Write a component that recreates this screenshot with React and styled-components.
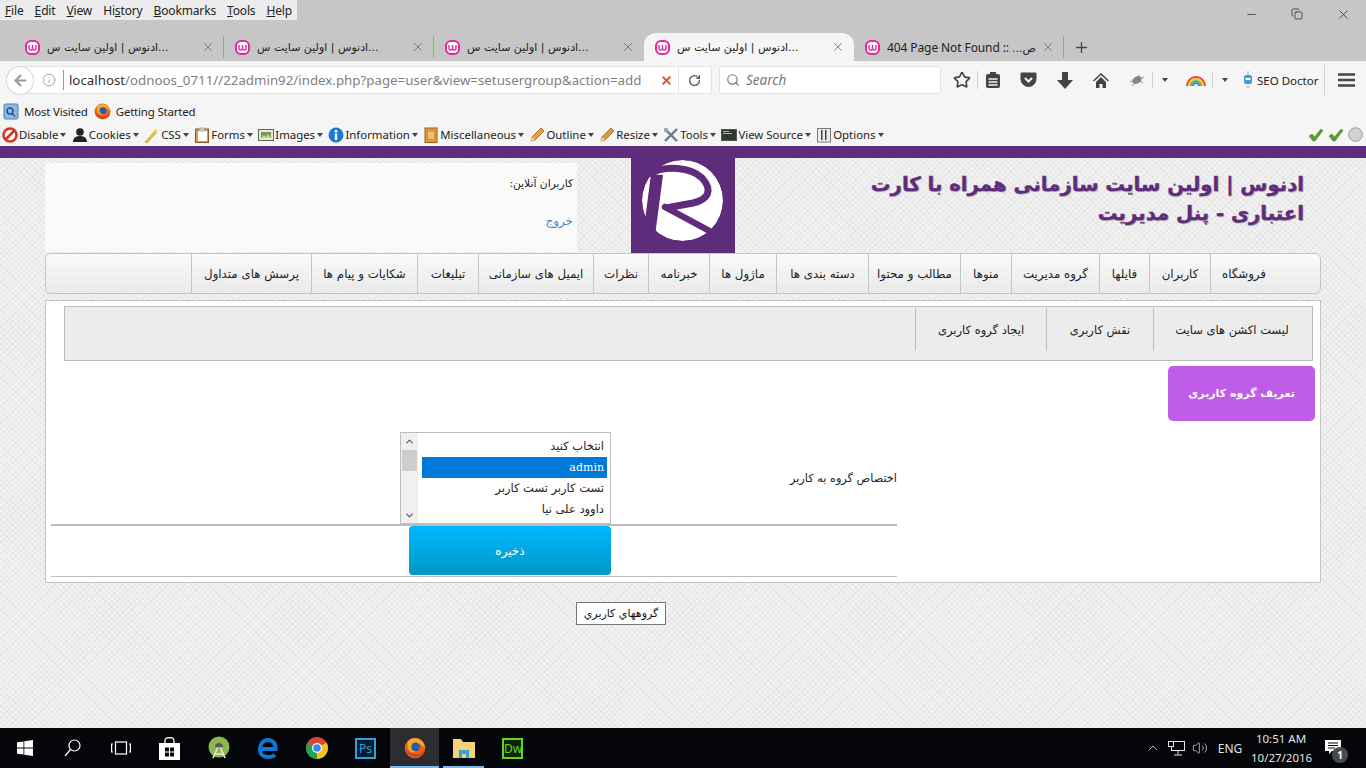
import React from 'react'
import styled, { createGlobalStyle } from 'styled-components'
import { Minus, Copy, X, Plus, RotateCw, Search, Info, ArrowLeft, Star, ChevronUp, ChevronDown, Volume2 } from 'lucide-react'

const GlobalStyle = createGlobalStyle`
  html, body { margin: 0; padding: 0; overflow: hidden; }
  body { font-family: "Noto Sans", sans-serif; }
  * { box-sizing: border-box; }
`

const Screen = styled.div`
  width: 1366px;
  height: 768px;
  display: flex;
  flex-direction: column;
  background: #c6c6c6;
`

/* ---------- browser chrome ---------- */
const TitleBar = styled.div`
  height: 33px;
  display: flex;
  align-items: flex-start;
`
const MenuBar = styled.div`
  width: 297px;
  height: 20px;
  background: #ececec;
  display: flex;
  align-items: center;
  gap: 11px;
  padding-left: 5px;
  font-size: 12px;
  letter-spacing: -.15px;
  color: #222;
  u { text-decoration: underline; }
`
const WinControls = styled.div`
  margin-left: auto;
  display: flex;
  color: #222;
`
const WinBtn = styled.div`
  width: 46px;
  height: 28px;
  display: flex;
  align-items: center;
  justify-content: center;
`
const TabRow = styled.div`
  height: 28px;
  display: flex;
  padding-left: 14px;
  align-items: stretch;
`
const Tab = styled.div`
  width: 210px;
  display: flex;
  align-items: center;
  padding: 0 9px 0 11px;
  gap: 7px;
  position: relative;
  font-size: 12px;
  color: #222;
  background: ${p => (p.$active ? '#f5f5f5' : 'transparent')};
  border-radius: ${p => (p.$active ? '12px 12px 0 0' : '0')};
  svg { flex-shrink: 0; }
  &::after {
    content: '';
    display: ${p => (p.$sep ? 'block' : 'none')};
    position: absolute;
    right: 0;
    top: 3px;
    bottom: 3px;
    width: 1px;
    background: #a0a0a0;
  }
`
const TabTitle = styled.div`
  width: ${p => (p.$ltr ? 147 : 129)}px;
  margin-right: auto;
  white-space: nowrap;
  font-family: "DejaVu Sans", sans-serif;
  font-size: 11px;
  text-align: left;
`
const TabLatin = styled.span`
  font-family: "Noto Sans", sans-serif;
  font-size: 12px;
  letter-spacing: -.1px;
`
const TabClose = styled.div`
  width: 14px;
  display: flex;
  color: #555;
`
const NewTab = styled.div`
  width: 34px;
  display: flex;
  align-items: center;
  justify-content: center;
  color: #444;
`
const NavRow = styled.div`
  height: 36px;
  background: #f5f5f5;
  display: flex;
  align-items: center;
  padding: 2px 0 0 6px;
`
const UrlBox = styled.div`
  width: 706px;
  height: 28px;
  background: #fff;
  border: 1px solid #e4e4e4;
  border-radius: 14px 2px 2px 14px;
  display: flex;
  align-items: center;
  color: #777;
`
const BackBtn = styled.div`
  width: 29px;
  height: 29px;
  border-radius: 50%;
  border: 1px solid #d8d8d8;
  background: #fff;
  margin-left: -1px;
  display: flex;
  align-items: center;
  justify-content: center;
  color: #9a9a9a;
`
const InfoSlot = styled.div`
  width: 29px;
  display: flex;
  justify-content: center;
  color: #999;
`
const UrlText = styled.div`
  width: 595px;
  border-left: 1px solid #999;
  padding-left: 5px;
  font-size: 13.3px;
  line-height: 20px;
  white-space: nowrap;
  overflow: hidden;
  color: #808080;
  b { font-weight: 400; color: #333; }
`
const StopSlot = styled.div`
  width: 13px;
  margin-left: 13px;
  display: flex;
  color: #e8592c;
`
const ReloadSlot = styled.div`
  margin-left: 5px;
  width: 34px;
  height: 26px;
  border-left: 1px solid #e4e4e4;
  display: flex;
  align-items: center;
  justify-content: center;
  color: #555;
`
const SearchBox = styled.div`
  width: 222px;
  height: 28px;
  margin-left: 7px;
  background: #fff;
  border: 1px solid #e4e4e4;
  border-radius: 2px;
  display: flex;
  align-items: center;
  gap: 6px;
  padding-left: 6px;
  color: #777;
  font-size: 13.5px;
  font-style: italic;
`
const Slot = styled.div`
  width: ${p => p.$w || 22}px;
  margin-left: ${p => p.$ml || 0}px;
  height: 22px;
  display: flex;
  align-items: center;
  justify-content: center;
  color: #444;
`
const Sep = styled.div`
  width: 1px;
  height: ${p => p.$h || 18}px;
  margin-left: ${p => p.$ml || 0}px;
  background: #cfcfcf;
`
const Caret = styled.span`
  display: inline-block;
  width: 0;
  height: 0;
  margin-left: ${p => p.$ml || 1}px;
  border-left: 3.5px solid transparent;
  border-right: 3.5px solid transparent;
  border-top: 4px solid #444;
`
const SeoText = styled.div`
  font-size: 11.5px;
  color: #222;
  margin-left: 2px;
  width: 62px;
  white-space: nowrap;
`
const BookmarkRow = styled.div`
  height: 26px;
  background: #f5f5f5;
  display: flex;
  align-items: center;
  padding: 2px 0 0 3px;
  font-size: 11.5px;
  letter-spacing: -.2px;
  color: #222;
`
const BookmarkItem = styled.div`
  display: flex;
  align-items: center;
  gap: 5px;
  margin-right: 6px;
`
const DevRow = styled.div`
  height: 23px;
  background: #f5f5f5;
  display: flex;
  align-items: center;
  padding-left: 2px;
  font-size: 11.4px;
  color: #222;
`
const DevItem = styled.div`
  display: flex;
  align-items: center;
  margin-right: 5.4px;
  gap: 1px;
  white-space: nowrap;
`
const DevStatus = styled.div`
  margin-left: auto;
  display: flex;
  align-items: center;
  gap: 4px;
  padding-right: 3px;
`
const PurpleBar = styled.div`
  height: 12px;
  background: #5f2c7c;
`

/* ---------- page ---------- */
const Page = styled.div`
  flex: 1;
  font-family: "DejaVu Sans", sans-serif;
  background-color: #f1f1f1;
  background-image:
    repeating-linear-gradient(45deg, rgba(0,0,0,.035) 0 1px, transparent 1px 4px),
    repeating-linear-gradient(-45deg, rgba(0,0,0,.035) 0 1px, transparent 1px 4px);
`
const Header = styled.div`
  height: 95px;
  display: flex;
  padding-left: 45px;
`
const UserBox = styled.div`
  width: 532px;
  height: 89px;
  margin-top: 5px;
  padding: 14px 4px 0 0;
  background: rgba(255,255,255,.72);
  direction: rtl;
  font-size: 10.7px;
  color: #222;
`
const LogoutLink = styled.div`
  margin-top: 24px;
  font-size: 12px;
  color: #4a86c0;
`
const LogoBox = styled.div`
  width: 104px;
  height: 95px;
  margin-left: 54px;
  background: #5f2c7c;
`
const SiteTitle = styled.div`
  width: 569px;
  padding: 12px 0 0 120px;
  direction: rtl;
  font-size: 19.7px;
  line-height: 29px;
  font-weight: 700;
  color: #5f2c7c;
  -webkit-text-stroke: .4px #5f2c7c;
  text-shadow: 1px 1px 1px rgba(0,0,0,.25);
`
const MainMenu = styled.div`
  width: 1276px;
  height: 41px;
  margin-left: 45px;
  padding-right: 43px;
  direction: rtl;
  display: flex;
  background: linear-gradient(#fafafa, #e9e9e9);
  border: 1px solid #c4c4c4;
  border-radius: 6px;
`
const MenuItem = styled.div`
  width: ${p => p.$w}px;
  border-left: 1px solid #c4c4c4;
  display: flex;
  align-items: center;
  justify-content: center;
  white-space: nowrap;
  font-size: 11.8px;
  color: #222;
`
const Panel = styled.div`
  width: 1276px;
  height: 283px;
  margin: 6px 0 0 45px;
  background: #fff;
  border: 1px solid #c4c4c4;
  display: flex;
  flex-direction: column;
`
const SubMenu = styled.div`
  width: 1249px;
  height: 55px;
  margin: 5px 0 0 18px;
  padding: 1px 2px 9px 0;
  direction: rtl;
  display: flex;
  background: #ececec;
  border: 1px solid #bcbcbc;
`
const SubItem = styled.div`
  width: ${p => p.$w}px;
  border-left: 1px solid #bcbcbc;
  display: flex;
  align-items: center;
  justify-content: center;
  white-space: nowrap;
  font-size: 11.5px;
  color: #222;
`
const PageHeading = styled.div`
  width: 147px;
  height: 55px;
  margin: 5px 5px 0 auto;
  background: #bf5ce8;
  border-radius: 5px;
  direction: rtl;
  display: flex;
  align-items: center;
  justify-content: center;
  color: #fff;
  font-size: 11px;
  font-weight: 700;
  white-space: nowrap;
`
const FormTable = styled.div`
  width: 846px;
  margin: 11px 0 0 5px;
`
const FormRow = styled.div`
  display: flex;
  height: ${p => p.$h}px;
  padding-left: ${p => p.$pl}px;
  border-bottom: ${p => p.$line}px solid #bdbdbd;
`
const ListBox = styled.div`
  width: 211px;
  height: 92px;
  border: 1px solid #bdbdbd;
  background: #fff;
  display: flex;
`
const ScrollTrack = styled.div`
  width: 17px;
  background: #f0f0f0;
  display: flex;
  flex-direction: column;
  align-items: center;
  color: #555;
`
const ScrollThumb = styled.div`
  width: 15px;
  height: 21px;
  margin: 1px 0 auto;
  background: #cdcdcd;
`
const ScrollArrow = styled.div`
  height: 16px;
  display: flex;
  align-items: center;
`
const Options = styled.div`
  flex: 1;
  padding: 3px 3px 0 4px;
  direction: rtl;
`
const Option = styled.div`
  height: 21px;
  padding-right: 3px;
  line-height: 21px;
  font-size: ${p => (p.$selected ? 11 : 11.5)}px;
  white-space: nowrap;
  background: ${p => (p.$selected ? '#0078d7' : 'transparent')};
  color: ${p => (p.$selected ? '#fff' : '#222')};
  font-family: ${p => (p.$selected ? '"DejaVu Serif", serif' : '"DejaVu Sans", sans-serif')};
`
const FieldLabel = styled.div`
  margin: 40px 0 0 auto;
  direction: rtl;
  font-size: 11.3px;
  color: #222;
  white-space: nowrap;
`
const SaveButton = styled.div`
  width: 202px;
  height: 49px;
  background: linear-gradient(#00b7fd, #0099c6);
  border-radius: 4px;
  color: #fff;
  font-size: 12px;
  display: flex;
  align-items: center;
  justify-content: center;
`
const GroupsButton = styled.div`
  width: 90px;
  height: 23px;
  margin: 19px 0 0 576px;
  background: #fff;
  border: 1px solid #777;
  direction: rtl;
  font-size: 11px;
  color: #111;
  display: flex;
  align-items: center;
  justify-content: center;
  white-space: nowrap;
`

/* ---------- taskbar ---------- */
const Taskbar = styled.div`
  height: 40px;
  background: #05060a;
  display: flex;
  align-items: center;
  color: #fff;
`
const TaskBtn = styled.div`
  width: ${p => p.$w || 49}px;
  height: 40px;
  display: flex;
  align-items: center;
  justify-content: center;
  background: ${p => (p.$active ? '#2c2d30' : 'transparent')};
  position: relative;
  &::after {
    content: '';
    display: ${p => (p.$open ? 'block' : 'none')};
    position: absolute;
    left: ${p => (p.$active ? 0 : 4)}px;
    right: ${p => (p.$active ? 0 : 4)}px;
    bottom: 0;
    height: 2px;
    background: #76b9ed;
  }
`
const AppTile = styled.div`
  width: 21px;
  height: 21px;
  border: 2px solid ${p => p.$c};
  background: ${p => p.$bg};
  color: ${p => p.$c};
  font-size: 12px;
  line-height: 17px;
  text-align: center;
  font-family: "Noto Sans", sans-serif;
`
const Tray = styled.div`
  margin-left: auto;
  display: flex;
  align-items: center;
  height: 40px;
  font-size: 12px;
  color: #e4e4e4;
`
const TrayIcon = styled.div`
  width: ${p => p.$w}px;
  display: flex;
  justify-content: center;
`
const Clock = styled.div`
  width: 60px;
  text-align: center;
  line-height: 19px;
  font-size: 11.5px;
  white-space: nowrap;
`
const Notify = styled.div`
  width: 41px;
  height: 24px;
  margin-left: 14px;
  padding-top: 4px;
  position: relative;
`
const NotifyBadge = styled.div`
  position: absolute;
  left: 7px;
  top: 11px;
  width: 16px;
  height: 16px;
  border-radius: 50%;
  background: #4a4a4a;
  color: #fff;
  font-size: 10px;
  font-weight: 700;
  line-height: 16px;
  text-align: center;
`

/* ---------- drawings ---------- */
const Favicon = () => (
  <svg width="15" height="15" viewBox="0 0 15 15">
    <rect x="1" y="1" width="13" height="13" rx="5" fill="#fff" stroke="#e6249b" strokeWidth="2" />
    <path d="M4 5v3.500c0 2 2.200 2 3.500.6c1.300 1.400 3.500 1.400 3.500-.6V5M7.500 5v4" fill="none" stroke="#e6249b" strokeWidth="1.400" />
  </svg>
)
const Firefox = ({ size = 18 }) => (
  <svg width={size} height={size} viewBox="0 0 18 18">
    <circle cx="9" cy="9" r="8.400" fill="#e8631c" />
    <path d="M3 4C5 1 9 .5 12 1.500C15 3 17 6 17 9C14 5 11 5 9 6C6 7 7 11 10 11C8 14 4 12 3 9Z" fill="#f7a72a" />
    <circle cx="9.500" cy="8" r="3.600" fill="#2a5ba8" />
    <path d="M1 9c1 6 7 9 12 7c3-1 4-4 4-7c-1 3-3 5-6 5C6 14 3 12 1 9Z" fill="#d9441c" />
  </svg>
)
const Logo = () => (
  <svg width="104" height="95" viewBox="0 0 104 95">
    <circle cx="51.500" cy="42.500" r="40.500" fill="#fff" />
    <path d="M14 62L20 16L32 17L24 78Z" fill="#5f2c7c" />
    <path d="M17 16C35 7 60 9 71 20C83 33 76 42 62 45L35 50" fill="none" stroke="#5f2c7c" strokeWidth="7" />
    <path d="M34 49L86 77" fill="none" stroke="#5f2c7c" strokeWidth="6.500" strokeLinecap="round" />
    <path d="M0 0h104v95H0ZM51.500 2A40.500 40.500 0 1 0 51.500 83A40.500 40.500 0 1 0 51.500 2Z" fill="#5f2c7c" fillRule="evenodd" />
  </svg>
)
const Pencil = ({ c = '#e9a23b' }) => (
  <svg width="16" height="16" viewBox="0 0 16 16">
    <path d="M2 14l1-4L12 1l3 3-9 9Z" fill={c} stroke="#9a5a18" strokeWidth=".8" />
    <path d="M2 14l1-4 3 3Z" fill="#f4dcb0" />
  </svg>
)
const devIcons = {
  disable: (
    <svg width="16" height="16" viewBox="0 0 16 16">
      <circle cx="8" cy="8" r="6.500" fill="#fff" stroke="#d8341f" strokeWidth="2.600" />
      <path d="M3.500 12.500l9-9" stroke="#d8341f" strokeWidth="2.600" />
    </svg>
  ),
  cookies: (
    <svg width="16" height="16" viewBox="0 0 16 16">
      <circle cx="8" cy="5" r="3.800" fill="#222" />
      <path d="M1 15c0-4 3-6 7-6s7 2 7 6Z" fill="#222" />
    </svg>
  ),
  css: (
    <svg width="16" height="16" viewBox="0 0 16 16">
      <path d="M1 15L11 4l1.500 1.500L3 16Z" fill="#e8c53a" stroke="#8a7a20" strokeWidth=".5" />
      <path d="M12 1l.7 1.800L14.500 3.500l-1.800.7L12 6l-.7-1.800L9.500 3.500l1.800-.7Z" fill="#f2dd52" />
    </svg>
  ),
  forms: (
    <svg width="16" height="16" viewBox="0 0 16 16">
      <rect x="1.500" y="2" width="13" height="13.500" fill="#d99a55" stroke="#8f5a20" />
      <rect x="4" y="4" width="9" height="10" fill="#fff" />
      <rect x="5" y="1" width="6" height="3" fill="#ccc" stroke="#777" strokeWidth=".5" />
    </svg>
  ),
  images: (
    <svg width="16" height="16" viewBox="0 0 16 16">
      <rect x=".5" y="2.500" width="15" height="11" fill="#e8e8e0" stroke="#5a6a4a" />
      <rect x="3" y="5" width="10" height="6" fill="#6f9a55" />
      <path d="M3 11l3-3 2 2 2-3 3 4Z" fill="#d8d08a" />
    </svg>
  ),
  info: (
    <svg width="16" height="16" viewBox="0 0 16 16">
      <circle cx="8" cy="8" r="7.500" fill="#1f78d1" />
      <rect x="6.800" y="6.500" width="2.400" height="6.500" fill="#fff" />
      <circle cx="8" cy="4.200" r="1.400" fill="#fff" />
    </svg>
  ),
  misc: (
    <svg width="16" height="16" viewBox="0 0 16 16">
      <rect x="2" y="1" width="12" height="14.500" fill="#e09a3e" stroke="#96601c" />
      <rect x="4.500" y="4" width="7" height="8.500" fill="#f0be72" stroke="#b57a2a" strokeWidth=".6" />
    </svg>
  ),
  tools: (
    <svg width="16" height="16" viewBox="0 0 16 16">
      <path d="M2 2l12 12M14 2L2 14" stroke="#6a7a8a" strokeWidth="2.400" />
      <circle cx="3" cy="3" r="2.200" fill="#9aa8b5" />
    </svg>
  ),
  source: (
    <svg width="16" height="16" viewBox="0 0 16 16">
      <rect x=".5" y="2.500" width="15" height="11" fill="#2f3a2f" stroke="#555" />
      <rect x="2" y="4" width="6" height="1" fill="#8fd07a" />
      <rect x="2" y="6" width="9" height="1" fill="#8fd07a" />
    </svg>
  ),
  options: (
    <svg width="16" height="16" viewBox="0 0 16 16">
      <rect x="1.500" y="1.500" width="13" height="13.500" fill="#eee" stroke="#777" />
      <rect x="5" y="3" width="1.500" height="10" fill="#444" />
      <rect x="9" y="3" width="1.500" height="10" fill="#444" />
    </svg>
  ),
}
const Check = () => (
  <svg width="16" height="14" viewBox="0 0 16 14">
    <path d="M1 8l3-2 2.500 3L13 1l2 1.500L7 13H5Z" fill="#5aa02c" stroke="#3e7a1a" strokeWidth=".5" />
  </svg>
)
const Rainbow = () => (
  <svg width="22" height="12" viewBox="0 0 22 12" fill="none" strokeWidth="2">
    <path d="M2 12a9 9 0 0 1 18 0" stroke="#e8443a" />
    <path d="M4 12a7 7 0 0 1 14 0" stroke="#f2c230" />
    <path d="M6 12a5 5 0 0 1 10 0" stroke="#5cb84a" />
    <path d="M8 12a3 3 0 0 1 6 0" stroke="#3a8ad8" />
  </svg>
)

const devTools = [
  ['disable', 'Disable'], ['cookies', 'Cookies'], ['css', 'CSS'], ['forms', 'Forms'],
  ['images', 'Images'], ['info', 'Information'], ['misc', 'Miscellaneous'], ['outline', 'Outline'],
  ['resize', 'Resize'], ['tools', 'Tools'], ['source', 'View Source'], ['options', 'Options'],
]
const mainMenu = [
  ['فروشگاه', 67], ['کاربران', 61], ['فایلها', 50], ['گروه مدیریت', 88], ['منوها', 51],
  ['مطالب و محتوا', 92], ['دسته بندی ها', 92], ['ماژول ها', 67], ['خبرنامه', 61], ['نظرات', 55],
  ['ایمیل های سازمانی', 115], ['تبلیغات', 61], ['شکایات و پیام ها', 106], ['پرسش های متداول', 120],
]
const siteTab = '...ادنوس | اولین سایت س'

const SiteTab = ({ active, sep }) => (
  <Tab $active={active} $sep={sep}>
    <Favicon />
    <TabTitle dir="rtl">{siteTab}</TabTitle>
    <TabClose><X size={14} strokeWidth={1.2} /></TabClose>
  </Tab>
)

export default function App() {
  return (
    <Screen>
      <GlobalStyle />
      <TitleBar>
        <MenuBar>
          <span><u>F</u>ile</span>
          <span><u>E</u>dit</span>
          <span><u>V</u>iew</span>
          <span>Hi<u>s</u>tory</span>
          <span><u>B</u>ookmarks</span>
          <span><u>T</u>ools</span>
          <span><u>H</u>elp</span>
        </MenuBar>
        <WinControls>
          <WinBtn><Minus size={13} strokeWidth={1.3} /></WinBtn>
          <WinBtn><Copy size={12} strokeWidth={1.4} /></WinBtn>
          <WinBtn><X size={15} strokeWidth={1.1} /></WinBtn>
        </WinControls>
      </TitleBar>

      <TabRow>
        <SiteTab sep />
        <SiteTab sep />
        <SiteTab />
        <SiteTab active />
        <Tab $sep>
          <Favicon />
          <TabTitle $ltr>
            <TabLatin>404 Page Not Found :: </TabLatin>
            <span dir="rtl">ص...</span>
          </TabTitle>
          <TabClose><X size={14} strokeWidth={1.2} /></TabClose>
        </Tab>
        <NewTab><Plus size={17} strokeWidth={1.8} /></NewTab>
      </TabRow>

      <NavRow>
        <UrlBox>
          <BackBtn><ArrowLeft size={17} strokeWidth={3} /></BackBtn>
          <InfoSlot><Info size={14} strokeWidth={1.5} /></InfoSlot>
          <UrlText><b>localhost</b>/odnoos_0711//22admin92/index.php?page=user&amp;view=setusergroup&amp;action=add</UrlText>
          <StopSlot><X size={13} strokeWidth={4} /></StopSlot>
          <ReloadSlot><RotateCw size={13} strokeWidth={2.4} /></ReloadSlot>
        </UrlBox>
        <SearchBox><Search size={14} strokeWidth={2} />Search</SearchBox>
        <Slot $ml={10}><Star size={18} strokeWidth={2.2} /></Slot>
        <Sep $ml={4} />
        <Slot $ml={4}>
          <svg width="16" height="18" viewBox="0 0 16 18">
            <rect x="1" y="3" width="14" height="14" rx="2" fill="#444" />
            <rect x="5" y="1" width="6" height="4" fill="#444" />
            <path d="M3.500 8h9M3.500 11h9M3.500 14h9" stroke="#f5f5f5" strokeWidth="1.300" />
          </svg>
        </Slot>
        <Slot $ml={13}>
          <svg width="17" height="16" viewBox="0 0 17 16">
            <path d="M1 1h15v6a7.500 7.500 0 0 1-15 0Z" fill="#444" stroke="#444" strokeLinejoin="round" />
            <path d="M5 6l3.500 3.500L12 6" fill="none" stroke="#f5f5f5" strokeWidth="2.200" />
          </svg>
        </Slot>
        <Slot $ml={15}>
          <svg width="16" height="17" viewBox="0 0 16 17"><path d="M5 0h6v8h5l-8 9-8-9h5Z" fill="#444" /></svg>
        </Slot>
        <Slot $ml={14}>
          <svg width="16" height="16" viewBox="0 0 16 16">
            <path d="M8 1L0 8.500l1 1L8 3l7 6.500 1-1ZM3 10l5-5 5 5v6H9.500v-4h-3v4H3Z" fill="#444" />
          </svg>
        </Slot>
        <Slot $ml={14}>
          <svg width="16" height="14" viewBox="0 0 16 14">
            <ellipse cx="8" cy="7" rx="5" ry="3.500" fill="#8a8a8a" transform="rotate(-30 8 7)" />
            <path d="M1 9l5-2M3 13l5-5M10 2l-2 5M15 4l-6 3M14 10l-5-3" stroke="#777" strokeWidth=".8" />
          </svg>
        </Slot>
        <Sep $ml={4} $h={16} />
        <Slot $ml={0}><Caret /></Slot>
        <Slot $ml={10}><Rainbow /></Slot>
        <Sep $ml={5} $h={16} />
        <Slot $ml={0}><Caret /></Slot>
        <Slot $w={14} $ml={6}>
          <svg width="10" height="18" viewBox="0 0 10 18">
            <path d="M5 0v4" stroke="#aaa" />
            <rect x="1" y="4" width="8" height="9" rx="2" fill="#3fa0d8" />
            <rect x="2.500" y="7" width="5" height="2" fill="#fff" />
            <path d="M3 14l2 3 2-3" stroke="#bbb" fill="none" />
          </svg>
        </Slot>
        <SeoText>SEO Doctor</SeoText>
        <Sep $ml={5} $h={30} />
        <Slot $ml={10}>
          <svg width="17" height="14" viewBox="0 0 17 14">
            <path d="M0 1.500h17M0 7h17M0 12.500h17" stroke="#444" strokeWidth="2.600" />
          </svg>
        </Slot>
      </NavRow>

      <BookmarkRow>
        <BookmarkItem>
          <svg width="16" height="17" viewBox="0 0 16 17">
            <rect x="1" y="1" width="14" height="15" rx="1.500" fill="#8db8e0" stroke="#4a7fb5" />
            <circle cx="7" cy="8" r="3" fill="none" stroke="#1f4f8a" strokeWidth="1.400" />
            <path d="M9 10.500l3 3" stroke="#1f4f8a" strokeWidth="1.400" />
          </svg>
          Most Visited
        </BookmarkItem>
        <BookmarkItem><Firefox size={17} />Getting Started</BookmarkItem>
      </BookmarkRow>

      <DevRow>
        {devTools.map(([key, label]) => (
          <DevItem key={key}>
            {key === 'outline' && <Pencil />}
            {key === 'resize' && <Pencil c="#d99a4a" />}
            {devIcons[key]}
            {label}
            <Caret />
          </DevItem>
        ))}
        <DevStatus>
          <Check />
          <Check />
          <svg width="15" height="15" viewBox="0 0 15 15">
            <circle cx="7.500" cy="7.500" r="6.800" fill="#d2d2d2" stroke="#999" />
          </svg>
        </DevStatus>
      </DevRow>
      <PurpleBar />

      <Page>
        <Header>
          <UserBox>
            کاربران آنلاین:
            <LogoutLink>خروج</LogoutLink>
          </UserBox>
          <LogoBox><Logo /></LogoBox>
          <SiteTitle>ادنوس | اولین سایت سازمانی همراه با کارت اعتباری - پنل مدیریت</SiteTitle>
        </Header>

        <MainMenu>
          {mainMenu.map(([label, w]) => <MenuItem key={label} $w={w}>{label}</MenuItem>)}
        </MainMenu>

        <Panel>
          <SubMenu>
            <SubItem $w={157}>لیست اکشن های سایت</SubItem>
            <SubItem $w={107}>نقش کاربری</SubItem>
            <SubItem $w={131}>ایجاد گروه کاربری</SubItem>
          </SubMenu>
          <PageHeading>تعریف گروه کاربری</PageHeading>
          <FormTable>
            <FormRow $h={94} $pl={349} $line={2}>
              <ListBox>
                <ScrollTrack>
                  <ScrollArrow><ChevronUp size={11} strokeWidth={2.4} /></ScrollArrow>
                  <ScrollThumb />
                  <ScrollArrow><ChevronDown size={11} strokeWidth={2.4} /></ScrollArrow>
                </ScrollTrack>
                <Options>
                  <Option>انتخاب کنید</Option>
                  <Option $selected>admin</Option>
                  <Option>تست کاربر تست کاربر</Option>
                  <Option>داوود علی نیا</Option>
                </Options>
              </ListBox>
              <FieldLabel>اختصاص گروه به کاربر</FieldLabel>
            </FormRow>
            <FormRow $h={51} $pl={358} $line={1}>
              <SaveButton>ذخیره</SaveButton>
            </FormRow>
          </FormTable>
        </Panel>

        <GroupsButton>گروههاي کاربري</GroupsButton>
      </Page>

      <Taskbar>
        <TaskBtn>
          <svg width="16" height="16" viewBox="0 0 16 16" fill="#fff">
            <path d="M0 2.300l6.500-.9v6.200H0ZM7.300 1.300L16 0v7.600H7.300ZM0 8.400h6.500v6.200L0 13.700ZM7.300 8.400H16V16l-8.700-1.200Z" />
          </svg>
        </TaskBtn>
        <TaskBtn $w={47}>
          <svg width="17" height="18" viewBox="0 0 17 18" fill="none" stroke="#fff" strokeWidth="1.200">
            <circle cx="10.500" cy="6.500" r="5.500" /><path d="M6.500 10.500L1 17" />
          </svg>
        </TaskBtn>
        <TaskBtn>
          <svg width="20" height="14" viewBox="0 0 20 14" fill="none" stroke="#fff" strokeWidth="1.200">
            <rect x="4.500" y="1" width="11" height="12" /><path d="M2 3H.6v8H2M18 3h1.400v8H18" />
          </svg>
        </TaskBtn>
        <TaskBtn>
          <svg width="21" height="23" viewBox="0 0 21 23">
            <path d="M0 6h21v17H0Z" fill="#fff" />
            <path d="M6 7V3.500a4.500 3 0 0 1 9 0V7" fill="none" stroke="#fff" strokeWidth="1.300" />
            <path d="M6 10.500h4v4H6ZM11 10.500h4v4h-4ZM6 15.500h4v4H6ZM11 15.500h4v4h-4Z" fill="#05060a" />
          </svg>
        </TaskBtn>
        <TaskBtn>
          <svg width="22" height="24" viewBox="0 0 22 24">
            <circle cx="11" cy="11" r="10.500" fill="#8ab84c" />
            <path d="M7 11a4 4 0 0 1 8 0Z" fill="#556" />
            <path d="M9.500 12L5 22M12.500 12L17 22M6 18h10" stroke="#e8e8e8" strokeWidth="1.600" fill="none" />
          </svg>
        </TaskBtn>
        <TaskBtn>
          <svg width="20" height="21" viewBox="0 0 20 21" fill="none" stroke="#0f78d4" strokeWidth="4">
            <path d="M2.500 11h15C18 6 15 2 10 2S2 6 2 11.500 6 19 10.500 19c3 0 5-.8 6.500-2" />
          </svg>
        </TaskBtn>
        <TaskBtn>
          <svg width="22" height="22" viewBox="0 0 22 22">
            <circle cx="11" cy="11" r="11" fill="#dc4437" />
            <path d="M11 11L20.500 5.500A11 11 0 0 1 11 22Z" fill="#f5c518" />
            <path d="M11 11L11 22A11 11 0 0 1 1.500 5.500Z" fill="#22a353" />
            <circle cx="11" cy="11" r="5" fill="#fff" /><circle cx="11" cy="11" r="3.800" fill="#4285f4" />
          </svg>
        </TaskBtn>
        <TaskBtn><AppTile $c="#2fa3dc" $bg="#061c2c">Ps</AppTile></TaskBtn>
        <TaskBtn $active $open><Firefox size={22} /></TaskBtn>
        <TaskBtn $open>
          <svg width="22" height="20" viewBox="0 0 22 20">
            <path d="M0 1h8l2 3h12v16H0Z" fill="#f4d27a" />
            <path d="M6 12h10v8h-3v-4H9v4H6Z" fill="#3aa0d8" />
          </svg>
        </TaskBtn>
        <TaskBtn><AppTile $c="#5fd61f" $bg="#0e2406">Dw</AppTile></TaskBtn>

        <Tray>
          <TrayIcon $w={16}><ChevronUp size={16} strokeWidth={1.2} /></TrayIcon>
          <TrayIcon $w={30}>
            <svg width="17" height="15" viewBox="0 0 17 15" fill="none" stroke="#e4e4e4">
              <rect x="3.500" y=".5" width="13" height="9" /><path d="M10 9.500v4M6 14h8" />
              <rect x=".5" y=".5" width="5" height="5" fill="#05060a" />
            </svg>
          </TrayIcon>
          <TrayIcon $w={18}><Volume2 size={16} strokeWidth={1.1} /></TrayIcon>
          <TrayIcon $w={42}>ENG</TrayIcon>
          <Clock>10:51 AM<br />10/27/2016</Clock>
          <Notify>
            <svg width="16" height="15" viewBox="0 0 16 15">
              <path d="M0 0h16v11H7l-3 3v-3H0Z" fill="#fff" />
              <path d="M3 3h10M3 5.500h10M3 8h7" stroke="#05060a" />
            </svg>
            <NotifyBadge>1</NotifyBadge>
          </Notify>
        </Tray>
      </Taskbar>
    </Screen>
  )
}
